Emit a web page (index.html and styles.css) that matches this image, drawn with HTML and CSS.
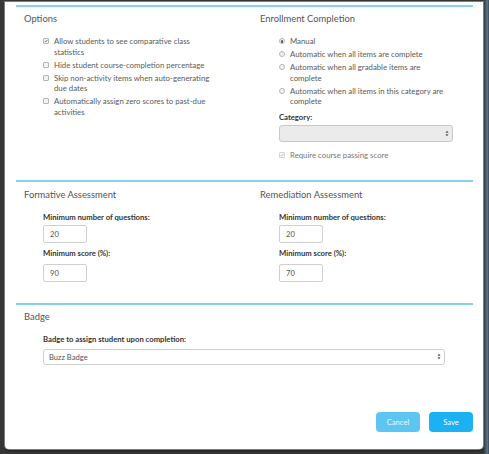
FILE: index.html
```html
<!DOCTYPE html>
<html>
<head>
<meta charset="utf-8">
<link rel="stylesheet" href="styles.css">
</head>
<body>
<div class="screen">
  <div class="modal">
    <section class="section section-top cols">
      <div class="col">
        <h2 class="heading">Options</h2>
        <ul class="opts">
          <li class="opt"><span class="box checked"><svg viewBox="0 0 6 6"><path d="M1.2 3.1 L2.5 4.4 L4.9 1.5" /></svg></span><span class="opt-text">Allow students to see comparative class statistics</span></li>
          <li class="opt"><span class="box"></span><span class="opt-text">Hide student course-completion percentage</span></li>
          <li class="opt"><span class="box"></span><span class="opt-text">Skip non-activity items when auto-generating due dates</span></li>
          <li class="opt"><span class="box"></span><span class="opt-text">Automatically assign zero scores to past-due activities</span></li>
        </ul>
      </div>
      <div class="col">
        <h2 class="heading">Enrollment Completion</h2>
        <ul class="opts">
          <li class="opt"><span class="radio on"></span><span class="opt-text">Manual</span></li>
          <li class="opt"><span class="radio"></span><span class="opt-text">Automatic when all items are complete</span></li>
          <li class="opt"><span class="radio"></span><span class="opt-text">Automatic when all gradable items are complete</span></li>
          <li class="opt"><span class="radio"></span><span class="opt-text">Automatic when all items in this category are complete</span></li>
        </ul>
        <div class="field-label cat-label">Category:</div>
        <div class="select select-disabled">
          <span class="select-value"></span>
          <svg class="arrows" viewBox="0 0 4 7"><path d="M0.4 2.7 L2 0.8 L3.6 2.7 Z M0.4 4.3 L2 6.2 L3.6 4.3 Z"/></svg>
        </div>
        <div class="opt opt-muted require"><span class="box checked box-disabled"><svg viewBox="0 0 6 6"><path d="M1.2 3.1 L2.5 4.4 L4.9 1.5" /></svg></span><span class="opt-text">Require course passing score</span></div>
      </div>
    </section>

    <section class="section section-mid cols">
      <div class="col">
        <h2 class="heading">Formative Assessment</h2>
        <div class="fields">
          <div class="field-label first">Minimum number of questions:</div>
          <div class="input">20</div>
          <div class="field-label second">Minimum score (%):</div>
          <div class="input input-second">90</div>
        </div>
      </div>
      <div class="col">
        <h2 class="heading">Remediation Assessment</h2>
        <div class="fields">
          <div class="field-label first">Minimum number of questions:</div>
          <div class="input">20</div>
          <div class="field-label second">Minimum score (%):</div>
          <div class="input input-second">70</div>
        </div>
      </div>
    </section>

    <section class="section section-badge">
      <h2 class="heading">Badge</h2>
      <div class="fields badge-fields">
        <div class="field-label first">Badge to assign student upon completion:</div>
        <div class="select select-badge">
          <span class="select-value">Buzz Badge</span>
          <svg class="arrows" viewBox="0 0 4 7"><path d="M0.4 2.7 L2 0.8 L3.6 2.7 Z M0.4 4.3 L2 6.2 L3.6 4.3 Z"/></svg>
        </div>
      </div>
    </section>

    <div class="footer">
      <button class="btn btn-cancel">Cancel</button>
      <button class="btn btn-save">Save</button>
    </div>
  </div>
  <div class="side-strip"></div>
</div>
</body>
</html>
```

FILE: styles.css
```css
* { box-sizing: border-box; }
html, body { margin: 0; padding: 0; }
body {
  width: 489px;
  height: 454px;
  overflow: hidden;
  background: #363636;
  font-family: "Lato", "Open Sans", sans-serif;
}
.screen {
  display: flex;
  height: 454px;
  padding: 2px 0 0 5px;
}
.modal {
  width: 478px;
  height: 447px;
  background: #ffffff;
  border-radius: 0 0 4px 4px;
  box-shadow: 0 0 0 1px #7d7d7d, 0 2px 2px rgba(0,0,0,0.45);
  padding: 3px 10px 17px 11px;
  display: flex;
  flex-direction: column;
}
.side-strip {
  margin-left: 1px;
  width: 5px;
  height: 454px;
  margin-top: -2px;
  background: linear-gradient(90deg, #2e3a45 0, #4b6072 40%, #5a7185 70%, #3a4a58 100%);
}
.section {
  border-top: 2px solid #86d0f2;
}
.section-top { padding-top: 5px; padding-bottom: 20px; }
.section-mid { padding-top: 6px; padding-bottom: 21px; }
.section-badge { padding-top: 5px; }
.cols {
  display: grid;
  grid-template-columns: 236px 1fr;
}
.heading {
  margin: 0;
  padding-left: 8px;
  font-size: 9.4px;
  line-height: 14px;
  font-weight: 400;
  color: #555;
}
.opts {
  list-style: none;
  margin: 10px 0 0 27px;
  padding: 0;
  width: 174px;
  display: flex;
  flex-direction: column;
  gap: 2.4px;
}
.opt {
  display: flex;
  align-items: flex-start;
  font-size: 7.8px;
  line-height: 10.6px;
  color: #5a5a5a;
}
.opt-text { flex: 1; padding-right: 5px; }
.box, .radio {
  flex: none;
  width: 6px;
  height: 6px;
  margin-top: 2.3px;
  margin-right: 5px;
  border: 0.8px solid #b5b5b5;
  background: #f3f3f3;
  display: flex;
  align-items: center;
  justify-content: center;
}
.box { border-radius: 1px; }
.box svg { width: 6px; height: 6px; display: block; }
.box svg path { fill: none; stroke: #444; stroke-width: 1.1; }
.box-disabled svg path { stroke: #aaa; }
.box-disabled { border-color: #d5d5d5; background: #f7f7f7; }
.radio {
  border-radius: 50%;
  margin-top: 2.3px;
}
.radio.on::after {
  content: "";
  width: 2.6px;
  height: 2.6px;
  border-radius: 50%;
  background: #555;
}
.opt-muted { color: #777; }
.require { margin: 7.5px 0 0 27px; }
.field-label {
  font-size: 7.7px;
  line-height: 11px;
  font-weight: 700;
  color: #333;
}
.cat-label { margin: 5px 0 0 27px; }
.select {
  display: flex;
  align-items: center;
  justify-content: space-between;
  border: 1px solid #cfcfcf;
  border-radius: 3px;
  padding: 0 3px 0 5px;
  font-size: 7.6px;
  color: #555;
}
.select-disabled {
  margin: 2.5px 0 0 27px;
  width: 174px;
  height: 17px;
  background: #ebebeb;
  border-color: #c9c9c9;
}
.arrows { width: 4px; height: 7px; display: block; }
.arrows path { fill: #555; }
.fields { padding-left: 27px; }
.field-label.first { margin-top: 9.5px; }
.field-label.second { margin-top: 5px; }
.input {
  margin-top: 2.5px;
  width: 44px;
  height: 18px;
  border: 1px solid #d0d0d0;
  border-radius: 2px;
  padding-left: 6px;
  font-size: 7.6px;
  line-height: 16px;
  color: #555;
}
.input-second { margin-top: 5px; }
.badge-fields .field-label.first { margin-top: 10px; }
.select-badge {
  margin-top: 3.5px;
  width: 402px;
  height: 16px;
  background: #fff;
}
.footer {
  margin-top: auto;
  display: flex;
  justify-content: flex-end;
  gap: 9px;
  padding-right: 0;
}
.btn {
  width: 44px;
  height: 20px;
  border: none;
  border-radius: 4px;
  color: #fff;
  font-family: "Lato", "Open Sans", sans-serif;
  font-size: 7.6px;
  padding: 0;
}
.btn-cancel { background: #5dc5f2; color: #eaf8ff; }
.btn-save { background: #1bb1f2; }
```
